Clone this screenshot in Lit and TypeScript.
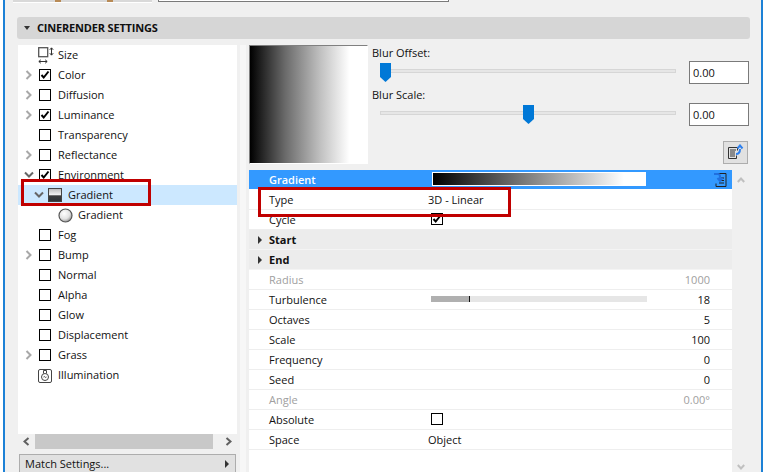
import { LitElement, html, css, svg, nothing } from "lit";
import { customElement } from "lit/decorators.js";

type TreeRow = { label: string; chev?: "r" | "d"; box?: "on" | "off"; icon?: string; indent?: number; sel?: boolean };
const tree: TreeRow[] = [
  { label: "Size", icon: "size" },
  { label: "Color", chev: "r", box: "on" },
  { label: "Diffusion", chev: "r", box: "off" },
  { label: "Luminance", chev: "r", box: "on" },
  { label: "Transparency", box: "off" },
  { label: "Reflectance", chev: "r", box: "off" },
  { label: "Environment", chev: "d", box: "on" },
  { label: "Gradient", chev: "d", icon: "grad", indent: 10, sel: true },
  { label: "Gradient", icon: "sphere", indent: 20 },
  { label: "Fog", box: "off" },
  { label: "Bump", chev: "r", box: "off" },
  { label: "Normal", box: "off" },
  { label: "Alpha", box: "off" },
  { label: "Glow", box: "off" },
  { label: "Displacement", box: "off" },
  { label: "Grass", chev: "r", box: "off" },
  { label: "Illumination", icon: "lamp" },
];

type PropRow = { label: string; value?: string; num?: string; dim?: boolean; group?: boolean; check?: "on" | "off"; bar?: boolean };
const props: PropRow[] = [
  { label: "Type", value: "3D - Linear" },
  { label: "Cycle", check: "on" },
  { label: "Start", group: true },
  { label: "End", group: true },
  { label: "Radius", num: "1000", dim: true },
  { label: "Turbulence", num: "18", bar: true },
  { label: "Octaves", num: "5" },
  { label: "Scale", num: "100" },
  { label: "Frequency", num: "0" },
  { label: "Seed", num: "0" },
  { label: "Angle", num: "0.00°", dim: true },
  { label: "Absolute", check: "off" },
  { label: "Space", value: "Object" },
];

const tick = svg`<path d="M2.5 6 L4.700 8.500 L9.500 2.500" fill="none" stroke="#000" stroke-width="2"/>`;
const checkbox = (on: boolean) => html`<svg class="cb" width="12" height="12" viewBox="0 0 12 12"><rect x=".5" y=".5" width="11" height="11" fill="#fff" stroke="#000"/>${on ? tick : nothing}</svg>`;

const icons: Record<string, unknown> = {
  size: html`<svg class="ico" width="17" height="17" viewBox="0 0 17 17"><rect x=".7" y=".7" width="9" height="9" fill="#fff" stroke="#555" stroke-width="1.300"/><path d="M13.500 1v7M11.800 2.800 13.500 .8l1.700 2M11.800 6.200 13.500 8.200l1.700-2M1 14.500h8M2.800 12.800 .8 14.500 2.800 16.200M7.200 12.800l2 1.700-2 1.700" fill="none" stroke="#333"/></svg>`,
  grad: html`<svg class="ico" width="14" height="14" viewBox="0 0 14 14"><defs><linearGradient id="g1" x1="0" y1="0" x2="0" y2="1"><stop offset="0" stop-color="#b5b5b5"/><stop offset=".5" stop-color="#f4f4f4"/><stop offset=".55" stop-color="#3c3c3c"/><stop offset="1" stop-color="#2c3136"/></linearGradient></defs><rect width="14" height="14" fill="url(#g1)"/><rect x=".5" y=".5" width="13" height="13" fill="none" stroke="#444"/></svg>`,
  sphere: html`<svg class="ico" width="15" height="15" viewBox="0 0 15 15"><defs><radialGradient id="g2" cx=".4" cy=".35" r=".7"><stop offset="0" stop-color="#fff"/><stop offset=".6" stop-color="#e2e2e2"/><stop offset="1" stop-color="#8a8a8a"/></radialGradient></defs><circle cx="7.500" cy="7.500" r="6.500" fill="url(#g2)" stroke="#555" stroke-width="1.200"/></svg>`,
  lamp: html`<svg class="ico" width="14" height="15" viewBox="0 0 14 15"><rect x=".5" y="1.500" width="13" height="13" rx="1.500" fill="#fff" stroke="#444"/><circle cx="7" cy="9" r="3.500" fill="none" stroke="#444"/><path d="M5.500 5.500V2.500h3v3M5.500 9q.8-1 1.500 0t1.500 0" fill="none" stroke="#444"/></svg>`,
};

const chev = (d: "r" | "d") =>
  d === "r"
    ? html`<svg width="8" height="10" viewBox="0 0 8 10"><path d="M1.500 1 5.500 5 1.500 9" fill="none" stroke="#a8a8a8" stroke-width="2"/></svg>`
    : html`<svg width="10" height="8" viewBox="0 0 10 8"><path d="M1 1.500 5 5.500 9 1.500" fill="none" stroke="#666" stroke-width="2"/></svg>`;

const thumb = html`<svg width="11" height="19" viewBox="0 0 11 19" style="display:block"><path d="M0 0H11V14L5.500 19 0 14Z" fill="#0078d7"/></svg>`;

@customElement("app-root")
export class AppRoot extends LitElement {
  static styles = css`
    :host { display: block; width: 764px; height: 472px; overflow: hidden; background: #fff; }
    * { box-sizing: border-box; }
    .win {
      position: relative; width: 764px; height: 472px; margin: 0; overflow: hidden;
      font: 11px "Open Sans", "Noto Sans", sans-serif; color: #111;
      padding-left: 3px; padding-right: 1px;
    }
    .frame {
      height: 472px; background: #f0f0f0; border-left: 2px solid #1c81d6; border-right: 2px solid #1c81d6;
      padding: 0 12px 0 12px; display: flex; flex-direction: column;
    }
    .tabs { height: 4px; display: flex; gap: 6px; flex: none; margin-left: -4px; margin-right: 300px; }
    .tab1 { width: 139px; height: 3px; background: #d9d9d9; border-bottom: 1px solid #fff; position: relative; }
    .tab2 { width: 291px; height: 2px; background: #fff; border-bottom: 1px solid #7a7a7a; border-left: 1px solid #7a7a7a; border-right: 1px solid #7a7a7a; }
    .tabmark { display: flex; gap: 46px; padding-left: 42px; height: 2px; }
    .tabmark i { width: 6px; height: 2px; background: #b88a55; }
    .head {
      margin-top: 13px; height: 22px; flex: none; background: #d6d6d6; border-radius: 3px;
      margin-right: -1px;
      display: flex; align-items: center; gap: 7px; padding-left: 6px; font-weight: 700; font-size: 11px; letter-spacing: -0.18px; color: #101010;
    }
    .head span:last-child { margin-top: -2px; }
    .tri-d { width: 0; height: 0; border-left: 3.500px solid transparent; border-right: 3.500px solid transparent; border-top: 4px solid #333; margin-left: 1px; }
    .body { flex: 1; min-height: 0; display: flex; margin-top: 6px; overflow: hidden; }
    .left { width: 219px; flex: none; display: flex; flex-direction: column; margin-left: 1px; }
    .tree { height: 389px; flex: none; background: #fff; }
    .tr { height: 20px; display: flex; align-items: center; position: relative; padding-left: 21px; }
    .tr.sel { background: #cce8ff; }
    .tr .c { position: absolute; top: 0; bottom: 0; display: flex; align-items: center; justify-content: center; width: 10px; left: 6px; }
    .tr .ic { width: 15px; height: 20px; display: flex; align-items: center; justify-content: flex-start; flex: none; }
    .tr .ic .ico { margin-left: -1px; flex: none; }
    .tr .lb { margin-left: 4px; margin-top: -2px; white-space: nowrap; }
    .cb { display: block; }
    .hs { height: 15px; flex: none; background: #f0f0f0; display: flex; align-items: center; }
    .hs .a { width: 17px; display: flex; justify-content: center; }
    .hs .t { width: 178px; height: 15px; background: #c8c8c8; }
    .match {
      margin-top: 5px; height: 24px; flex: none; margin-left: 1px; margin-right: 1px;
      background: #e1e1e1; border: 1px solid #adadad; display: flex; align-items: flex-start; justify-content: space-between;
      padding: 0 6px 0 5px; line-height: 18px; font-size: 11px;
    }
    .tri-r { width: 0; height: 0; border-top: 4px solid transparent; border-bottom: 4px solid transparent; border-left: 4px solid #333; margin-top: 5px; }
    .gut { width: 12px; flex: none; padding: 0 3px; }
    .gut i { display: block; width: 6px; height: 100%; background: #f7f7f7; }
    .right { flex: 1; display: flex; flex-direction: column; min-width: 0; }
    .top { height: 125px; flex: none; display: flex; }
    .prev {
      width: 119px; height: 119px; flex: none;
      background: linear-gradient(90deg, #000, #6a6a6a 30%, #c0c0c0 60%, #fff 85%);
      border-top: 1px solid #808080; border-left: 1px solid #808080; border-right: 1px solid #fff; border-bottom: 1px solid #fff;
    }
    .ctrls { flex: 1; padding-left: 4px; display: flex; flex-direction: column; }
    .sld { height: 42px; flex: none; display: grid; grid-template-columns: 1fr 60px; grid-template-rows: 16px 23px; align-content: start; column-gap: 13px; }
    .sld .lbl { grid-column: 1 / 3; height: 16px; line-height: 16px; }
    .sld .track { position: relative; height: 4px; background: #e6e6e6; border: 1px solid #d6d6d6; margin-left: 8px; margin-top: 8px; }
    .sld .knob { position: absolute; top: -7px; }
    .sld input {
      width: 60px; height: 23px; border: 1px solid #7a7a7a; background: #fff; font: inherit; padding: 0 3px; color: #111;
    }
    .btnrow { display: flex; justify-content: flex-end; padding-right: 1px; margin-top: 12px; }
    .ibtn { width: 25px; height: 23px; background: #e1e1e1; border: 1px solid #adadad; display: flex; align-items: center; justify-content: center; }
    .list-wrap { flex: 1; display: flex; min-height: 0; }
    .list { width: 483px; background: #fff; flex: none; }
    .scroll { flex: 1; background: #f0f0f0; display: flex; flex-direction: column; justify-content: space-between; align-items: center; padding: 7px 0 2px 0; height: 302px; }
    .pr {
      height: 20px; display: grid; grid-template-columns: 159px 1fr; align-items: center;
      border-bottom: 1px solid #eee; position: relative; padding-left: 20px;
    }
    .pr.hd { background: #3399ff; color: #fff; font-weight: 600; border-bottom: 1px solid #fff; grid-template-columns: 163px 1fr; }
    .pr.group { background: #ececec; font-weight: 700; border-bottom: 1px solid #f4f4f4; }
    .pr.group .tg { position: absolute; left: 9px; top: 6px; width: 0; height: 0; border-top: 4px solid transparent; border-bottom: 4px solid transparent; border-left: 4px solid #333; }
    .pr .num { position: absolute; right: 22px; top: 0; line-height: 19px; }
    .pr.dim { color: #a0a0a0; }
    .gbar { width: 214px; height: 14px; background: linear-gradient(90deg, #000, #fff 90%); border: 1px solid #fff; margin-top: -2px; }
    .pr .ck { padding-left: 3px; margin-top: -2px; }
    .tbar { display: flex; width: 216px; height: 6px; background: #e6e6e6; margin-left: 3px; margin-top: -1px; }
    .tbar i { width: 39px; background: #b0b0b0; border-right: 1px solid #111; display: block; }
    .hdi { position: absolute; right: 5px; top: 3px; display: block; }
    .rb { position: absolute; border: 3px solid #c00000; pointer-events: none; }
    .rb.a { left: 21px; top: 179px; width: 130px; height: 27px; }
    .rb.b { left: 258px; top: 187px; width: 253px; height: 30px; }
  `;

  render() {
    return html`<div class="win">
      <div class="frame">
        <div class="tabs">
          <div class="tab1"><div class="tabmark"><i></i><i></i></div></div>
          <div class="tab2"></div>
        </div>
        <div class="head"><span class="tri-d"></span><span>CINERENDER SETTINGS</span></div>
        <div class="body">
          <div class="left">
            <div class="tree">
              ${tree.map(
                (r) => html`<div class="tr ${r.sel ? "sel" : ""}" >
                  <span style=${r.indent ? `width:${r.indent}px;flex:none` : "display:none"}></span>
                  ${r.chev ? html`<span class="c" style=${r.indent ? `left:${6 + r.indent}px` : ""}>${chev(r.chev)}</span>` : nothing}
                  <span class="ic">${r.box ? checkbox(r.box === "on") : icons[r.icon as string]}</span>
                  <span class="lb">${r.label}</span>
                </div>`
              )}
            </div>
            <div class="hs">
              <span class="a"><svg width="7" height="9" viewBox="0 0 7 9"><path d="M5.500 1 1.500 4.500 5.500 8" fill="none" stroke="#606060" stroke-width="2"/></svg></span>
              <span class="t"></span>
              <span style="flex:1"></span>
              <span class="a"><svg width="7" height="9" viewBox="0 0 7 9"><path d="M1.500 1 5.500 4.500 1.500 8" fill="none" stroke="#606060" stroke-width="2"/></svg></span>
            </div>
            <div class="match"><span>Match Settings...</span><span class="tri-r"></span></div>
          </div>
          <div class="gut"><i></i></div>
          <div class="right">
            <div class="top">
              <div class="prev"></div>
              <div class="ctrls">
                ${[["Blur Offset:", 0], ["Blur Scale:", 143]].map(
                  ([l, x]) => html`<div class="sld">
                    <div class="lbl">${l}</div>
                    <div class="track">
                      <span class="knob" style="left:${(x as number) - 1}px">${thumb}</span>
                    </div>
                    <input value="0.00" />
                  </div>`
                )}
                <div class="btnrow"><div class="ibtn">
                  <svg width="17" height="17" viewBox="0 0 17 17"><path d="M1.500 3.500h9v3M1.500 3.500v11h8v-3" fill="none" stroke="#333"/><path d="M3 6h6M3 8h5M3 10h5M3 12h5" stroke="#333"/><path d="M9 10q4 0 4-5M10.500 4.500 13 1.500l2.500 3" fill="none" stroke="#2f80ed" stroke-width="2"/></svg>
                </div></div>
              </div>
            </div>
            <div class="list-wrap">
              <div class="list">
                <div class="pr hd">
                  <span>Gradient</span>
                  <div class="gbar"></div>
                  <svg class="hdi" width="13" height="15" viewBox="0 0 13 15"><path d="M4 .5h8v13H2v-3" fill="none" stroke="#222"/><path d="M5 5h5M5 7.500h5M5 10h5" stroke="#222"/><path d="M0 1h4q2 0 2 3v3M3.500 5l2.500 3 2.500-3" fill="none" stroke="#2070e0" stroke-width="2"/></svg>
                </div>
                ${props.map(
                  (p) => html`<div class="pr ${p.group ? "group" : ""} ${p.dim ? "dim" : ""}">
                    ${p.group ? html`<span class="tg"></span>` : nothing}
                    <span>${p.label}</span>
                    ${p.value ? html`<span>${p.value}</span>` : nothing}
                    ${p.check ? html`<span class="ck">${checkbox(p.check === "on")}</span>` : nothing}
                    ${p.bar ? html`<div class="tbar"><i></i></div>` : nothing}
                    ${p.num ? html`<span class="num">${p.num}</span>` : nothing}
                  </div>`
                )}
              </div>
              <div class="scroll">
                <svg width="8" height="6" viewBox="0 0 8 6"><path d="M.8 5 4 1.500 7.200 5" fill="none" stroke="#c0c0c0" stroke-width="2"/></svg>
                <svg width="8" height="6" viewBox="0 0 8 6"><path d="M.8 1 4 4.500 7.200 1" fill="none" stroke="#c0c0c0" stroke-width="2"/></svg>
              </div>
            </div>
          </div>
        </div>
      </div>
      <div class="rb a"></div>
      <div class="rb b"></div>
    </div>`;
  }
}
